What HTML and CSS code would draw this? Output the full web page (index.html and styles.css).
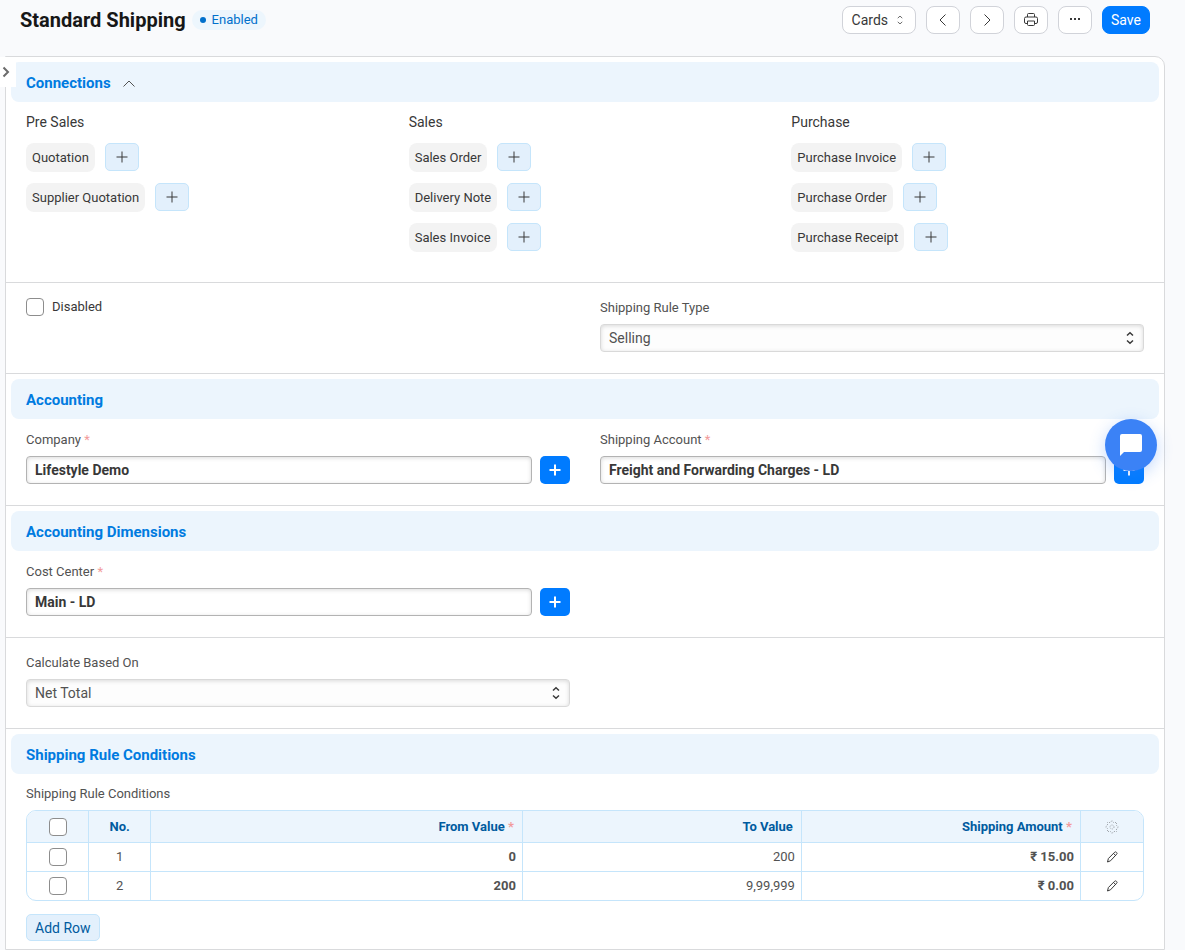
FILE: index.html
```html
<!DOCTYPE html>
<html lang="en">
<head>
<meta charset="utf-8">
<title>Standard Shipping</title>
<link rel="stylesheet" href="styles.css">
</head>
<body>
<svg class="sprite" aria-hidden="true">
  <symbol id="plus" viewBox="0 0 16 16"><path d="M8 2.500v11M2.500 8h11"/></symbol>
  <symbol id="updown" viewBox="0 0 16 16"><path d="M5 5.500 8 2.800l3 2.700M5 10.500l3 2.700 3-2.700"/></symbol>
  <symbol id="pencil" viewBox="0 0 16 16"><path d="M3.500 13 4.400 9.500l6.300-6.300c.5-.5 1.200-.4 1.600 0l.4.400c.5.500.5 1.100 0 1.600L6.500 11.800zM9.500 4.400l2 2"/></symbol>
</svg>

<header class="page-head">
  <h1 class="page-title">Standard Shipping</h1>
  <span class="status">Enabled</span>
  <div class="actions">
    <button class="btn btn-cards" type="button">Cards <svg class="icon icon-small"><use href="#updown"/></svg></button>
    <button class="btn btn-icon" type="button" aria-label="Previous"><svg class="icon" viewBox="0 0 16 16"><path d="M10.500 2.500 5 8l5.500 5.500"/></svg></button>
    <button class="btn btn-icon" type="button" aria-label="Next"><svg class="icon" viewBox="0 0 16 16"><path d="M5.500 2.500 11 8l-5.500 5.500"/></svg></button>
    <button class="btn btn-icon" type="button" aria-label="Print"><svg class="icon" viewBox="0 0 16 16"><path d="M4.500 5V2.500q0-1 1-1h5q1 0 1 1V5M4.500 11.500H3q-1.500 0-1.500-1.500V6.500Q1.500 5 3 5h10q1.500 0 1.500 1.500V10q0 1.500-1.500 1.500h-1.500M4.500 9h7v3.500q0 1-1 1h-5q-1 0-1-1z"/></svg></button>
    <button class="btn btn-icon" type="button" aria-label="Menu"><svg class="icon icon-dots" viewBox="0 0 16 16"><rect x="3" y="6" width="2" height="2"/><rect x="7" y="6" width="2" height="2"/><rect x="11" y="6" width="2" height="2"/></svg></button>
    <button class="btn btn-primary" type="button">Save</button>
  </div>
</header>

<button class="sidebar-toggle" type="button" aria-label="Open sidebar"><svg class="icon" viewBox="0 0 16 16"><path d="m5.500 3.500 4.500 4.500-4.500 4.500"/></svg></button>

<main class="form">
  <section class="section">
    <h2 class="section-head">Connections <svg class="icon" viewBox="0 0 16 16"><path d="M2.500 10.500 8 5l5.500 5.500"/></svg></h2>
    <div class="columns columns-3">
      <div class="column links">
        <h3 class="links-title">Pre Sales</h3>
        <div class="link-row"><a class="badge" href="#">Quotation</a><button class="btn-new" type="button" aria-label="New Quotation"><svg class="icon"><use href="#plus"/></svg></button></div>
        <div class="link-row"><a class="badge" href="#">Supplier Quotation</a><button class="btn-new" type="button" aria-label="New Supplier Quotation"><svg class="icon"><use href="#plus"/></svg></button></div>
      </div>
      <div class="column links">
        <h3 class="links-title">Sales</h3>
        <div class="link-row"><a class="badge" href="#">Sales Order</a><button class="btn-new" type="button" aria-label="New Sales Order"><svg class="icon"><use href="#plus"/></svg></button></div>
        <div class="link-row"><a class="badge" href="#">Delivery Note</a><button class="btn-new" type="button" aria-label="New Delivery Note"><svg class="icon"><use href="#plus"/></svg></button></div>
        <div class="link-row"><a class="badge" href="#">Sales Invoice</a><button class="btn-new" type="button" aria-label="New Sales Invoice"><svg class="icon"><use href="#plus"/></svg></button></div>
      </div>
      <div class="column links">
        <h3 class="links-title">Purchase</h3>
        <div class="link-row"><a class="badge" href="#">Purchase Invoice</a><button class="btn-new" type="button" aria-label="New Purchase Invoice"><svg class="icon"><use href="#plus"/></svg></button></div>
        <div class="link-row"><a class="badge" href="#">Purchase Order</a><button class="btn-new" type="button" aria-label="New Purchase Order"><svg class="icon"><use href="#plus"/></svg></button></div>
        <div class="link-row"><a class="badge" href="#">Purchase Receipt</a><button class="btn-new" type="button" aria-label="New Purchase Receipt"><svg class="icon"><use href="#plus"/></svg></button></div>
      </div>
    </div>
  </section>

  <section class="section">
    <div class="columns columns-plain">
      <div class="column"><label class="check-label"><input class="check" type="checkbox"> Disabled</label></div>
      <div class="column">
        <label class="label" for="rule-type">Shipping Rule Type</label>
        <div class="select-wrap"><select class="control control-select" id="rule-type"><option>Selling</option></select><svg class="icon select-icon"><use href="#updown"/></svg></div>
      </div>
    </div>
  </section>

  <section class="section">
    <h2 class="section-head">Accounting</h2>
    <div class="columns">
      <div class="column">
        <label class="label" for="company">Company <span class="req">*</span></label>
        <div class="field"><input class="control control-bold" id="company" type="text" value="Lifestyle Demo"><button class="btn-add" type="button" aria-label="New company"><svg class="icon"><use href="#plus"/></svg></button></div>
      </div>
      <div class="column">
        <label class="label" for="account">Shipping Account <span class="req">*</span></label>
        <div class="field"><input class="control control-bold" id="account" type="text" value="Freight and Forwarding Charges - LD"><button class="btn-add" type="button" aria-label="New account"><svg class="icon"><use href="#plus"/></svg></button></div>
      </div>
    </div>
  </section>

  <section class="section">
    <h2 class="section-head">Accounting Dimensions</h2>
    <div class="columns">
      <div class="column">
        <label class="label" for="cost-center">Cost Center <span class="req">*</span></label>
        <div class="field"><input class="control control-bold" id="cost-center" type="text" value="Main - LD"><button class="btn-add" type="button" aria-label="New cost center"><svg class="icon"><use href="#plus"/></svg></button></div>
      </div>
    </div>
  </section>

  <section class="section">
    <div class="columns columns-plain">
      <div class="column">
        <label class="label" for="based-on">Calculate Based On</label>
        <div class="select-wrap"><select class="control control-select" id="based-on"><option>Net Total</option></select><svg class="icon select-icon"><use href="#updown"/></svg></div>
      </div>
    </div>
  </section>

  <section class="section">
    <h2 class="section-head">Shipping Rule Conditions</h2>
    <div class="grid-area">
      <div class="label" id="grid-label">Shipping Rule Conditions</div>
      <table class="grid" aria-labelledby="grid-label">
        <colgroup><col class="col-narrow"><col class="col-narrow"><col class="col-from"><col class="col-value"><col class="col-value"><col class="col-narrow"></colgroup>
        <thead>
          <tr><th><input class="check" type="checkbox" aria-label="Select all"></th><th>No.</th><th class="num">From Value <span class="req">*</span></th><th class="num">To Value</th><th class="num">Shipping Amount <span class="req">*</span></th><th><svg class="icon icon-gear" viewBox="0 0 16 16"><path d="M8 1.500 9.500 3.500 12.500 3.500 12.500 6.500 14.500 8 12.500 9.500 12.500 12.500 9.500 12.500 8 14.500 6.500 12.500 3.500 12.500 3.500 9.500 1.500 8 3.500 6.500 3.500 3.500 6.500 3.500z"/><circle cx="8" cy="8" r="2"/></svg></th></tr>
        </thead>
        <tbody>
          <tr><td><input class="check" type="checkbox" aria-label="Select row 1"></td><td>1</td><td class="num strong">0</td><td class="num">200</td><td class="num strong">₹ 15.00</td><td><svg class="icon"><use href="#pencil"/></svg></td></tr>
          <tr><td><input class="check" type="checkbox" aria-label="Select row 2"></td><td>2</td><td class="num strong">200</td><td class="num">9,99,999</td><td class="num strong">₹ 0.00</td><td><svg class="icon"><use href="#pencil"/></svg></td></tr>
        </tbody>
      </table>
      <button class="btn-row" type="button">Add Row</button>
    </div>
  </section>
</main>

<button class="chat" type="button" aria-label="Chat"><svg class="chat-icon" viewBox="0 0 24 24"><path d="M3 1h18a2 2 0 0 1 2 2v14a2 2 0 0 1-2 2H5l-4 4V3a2 2 0 0 1 2-2z"/></svg></button>
</body>
</html>
```

FILE: styles.css
```css
* { box-sizing: border-box; }

body {
  margin: 0;
  background: #f9fafc;
  color: #383838;
  font-family: Roboto, "Noto Sans", sans-serif;
  font-size: 13px;
  line-height: 20px;
}

button, input, select { font: inherit; color: inherit; }
button { padding: 0; cursor: pointer; }
h1, h2, h3 { margin: 0; }

.sprite { display: none; }

.icon {
  width: 16px;
  height: 16px;
  flex: none;
  fill: none;
  stroke: #383838;
  stroke-width: 1;
}
.icon-small { width: 12px; height: 12px; }
.icon-dots { fill: #383838; stroke: none; }
.icon-gear { stroke: #a3a8ae; stroke-dasharray: 1 1; }

/* Header */
.page-head {
  display: flex;
  align-items: center;
  height: 56px;
  padding: 0 35px 16px 20px;
}
.page-title {
  color: #171717;
  font-size: 20px;
  font-weight: 700;
  line-height: 28px;
}
.status {
  display: flex;
  align-items: center;
  gap: 6px;
  margin-left: 6px;
  padding: 0 8px;
  border-radius: 10px;
  background: #edf6fd;
  color: #0070cc;
}
.status::before {
  content: "";
  width: 6px;
  height: 6px;
  border-radius: 50%;
  background: #0070cc;
}
.actions { display: flex; gap: 10px; margin-left: auto; }
.btn {
  display: flex;
  align-items: center;
  justify-content: center;
  height: 28px;
  border: 1px solid #d1d3d9;
  border-radius: 8px;
  background: #fff;
  font-size: 14px;
}
.btn-cards { gap: 6px; padding: 0 9px; }
.btn-icon { width: 34px; }
.btn-primary { padding: 0 8px; border-color: #007bff; background: #007bff; color: #fff; }

.sidebar-toggle {
  position: absolute;
  top: 57px;
  left: 0;
  display: flex;
  align-items: center;
  width: 16px;
  height: 30px;
  border: 0;
  background: #fff;
}
.sidebar-toggle .icon { margin-left: -2px; stroke: #6b6b6b; stroke-width: 2; }

/* Form */
.form {
  margin: 0 20px 0 5px;
  border: 1px solid #d9dadc;
  border-radius: 0 10px 0 0;
  background: #fff;
}
.section + .section { border-top: 1px solid #d9dadc; }
.section { padding: 5px 5px 0; }
.section-head {
  display: flex;
  align-items: center;
  gap: 10px;
  height: 40px;
  padding: 2px 15px 0;
  border-radius: 8px;
  background: #ecf5fd;
  color: #007be0;
  font-size: 15px;
  font-weight: 700;
}
.section-head .icon { margin-top: 2px; stroke: #525252; }
.columns { display: grid; grid-template-columns: 1fr 1fr; padding: 10px 0 21px; }
.columns-3 { grid-template-columns: 1fr 1fr 1fr; padding-bottom: 30px; }
.columns-plain { padding-top: 9px; }
.column { padding: 0 15px; }

.links { display: flex; flex-direction: column; gap: 11px; }
.links-title { font-size: 14px; font-weight: 400; line-height: 20px; }
.link-row { display: flex; gap: 10px; align-items: flex-start; }
.badge {
  padding: 5px 6px 4px;
  border-radius: 8px;
  background: #f3f3f3;
  color: #383838;
  text-decoration: none;
}
.btn-new {
  display: flex;
  align-items: center;
  justify-content: center;
  width: 34px;
  height: 28px;
  padding-bottom: 1px;
  border: 1px solid #c5e5fb;
  border-radius: 5px;
  background: #e3f0fc;
}

.label { display: block; margin-bottom: 5px; color: #525252; line-height: 22px; }
.req { color: #f29b9b; }
.check {
  display: block;
  width: 18px;
  height: 18px;
  margin: 0;
  border: 1px solid #8d8d8d;
  border-radius: 4px;
  background: #fff;
  appearance: none;
}
.check-label { display: flex; gap: 8px; align-items: center; }
.control {
  width: 100%;
  min-width: 0;
  height: 28px;
  padding: 0 8px;
  border: 1px solid #b3b3b3;
  border-radius: 4px;
  background: #fff;
  box-shadow: inset 0 1px 4px #00000026;
  font-size: 14px;
}
.control-bold { font-weight: 700; }
.control-select {
  display: block;
  border-color: #d9d9d9;
  background: #fdfdfd;
  color: #525252;
  appearance: none;
}
.field { display: flex; gap: 8px; }
.btn-add {
  display: flex;
  align-items: center;
  justify-content: center;
  flex: none;
  width: 30px;
  height: 28px;
  border: 0;
  border-radius: 5px;
  background: #007bff;
}
.btn-add .icon { stroke: #fff; stroke-width: 2; }
.select-wrap { position: relative; }
.select-icon { position: absolute; top: 6px; right: 6px; stroke-width: 1.5; pointer-events: none; }

/* Conditions table */
.grid-area { padding: 9px 15px 8px; }
.grid {
  width: 100%;
  border: 1px solid #c5e5fb;
  border-radius: 10px;
  border-spacing: 0;
  table-layout: fixed;
  overflow: hidden;
}
.col-from { width: 33.3%; }
.col-value { width: 25%; }
.grid th, .grid td {
  height: 29px;
  padding: 0 6px;
  border-right: 1px solid #c5e5fb;
  border-bottom: 1px solid #c5e5fb;
  text-align: center;
}
.grid th { height: 32px; background: #ecf5fd; color: #005b9f; font-weight: 700; }
.grid td { color: #525252; }
.grid tr > :last-child { border-right: 0; }
.grid tbody tr:last-child td { height: 28px; border-bottom: 0; }
.grid .num { text-align: right; }
.grid th.num { padding-right: 8px; }
.grid .strong { font-weight: 700; }
.grid .check { margin: 0 auto; }
.grid .icon { display: block; margin: 0 auto; }
.btn-row {
  height: 27px;
  margin-top: 13px;
  padding: 0 8px;
  border: 1px solid #c5e5fb;
  border-radius: 5px;
  background: #e3f0fc;
  color: #005b9f;
  font-size: 14px;
}

.chat {
  position: fixed;
  top: 419px;
  right: 28px;
  display: flex;
  align-items: center;
  justify-content: center;
  width: 52px;
  height: 52px;
  border: 0;
  border-radius: 50%;
  background: #3b82f6;
  box-shadow: 0 4px 16px #3b82f64d;
}
.chat-icon { width: 24px; height: 24px; fill: #fff; }
```
